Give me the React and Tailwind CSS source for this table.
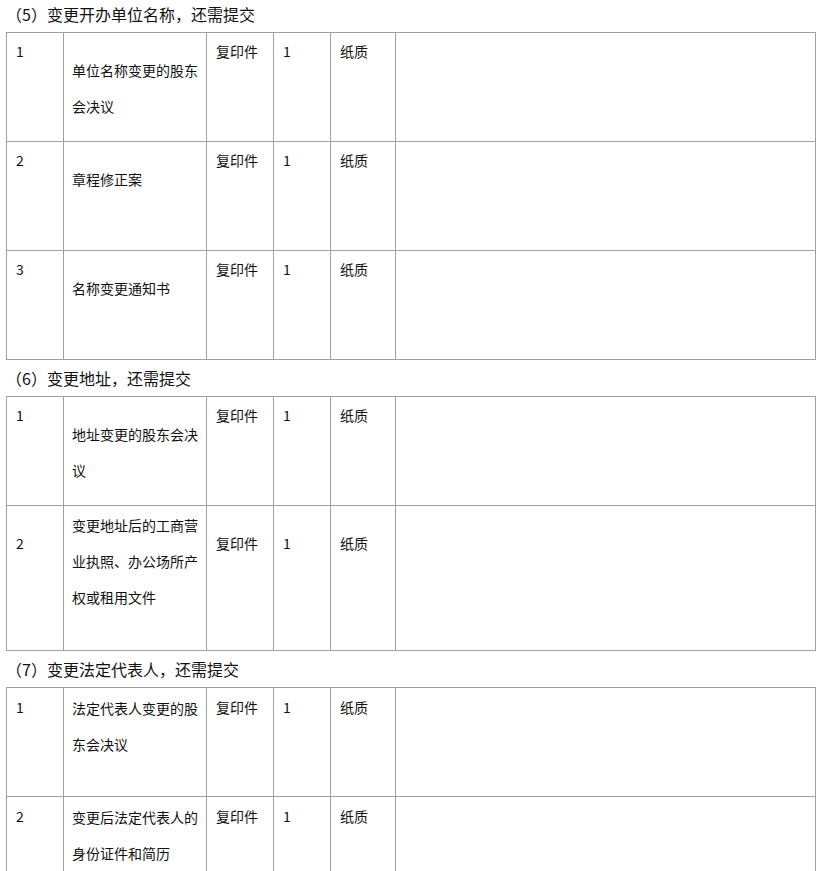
import React from 'react';

const sections = [
  {
    title: '（5）变更开办单位名称，还需提交',
    rows: [
      { no: '1', name: '单位名称变更的股东会决议', h: 'h-[108px]', namePad: 'pt-[19px]', pad: 'pt-[8px]' },
      { no: '2', name: '章程修正案', h: 'h-[109px]', namePad: 'pt-[19px]', pad: 'pt-[8px]' },
      { no: '3', name: '名称变更通知书', h: 'h-[109px]', namePad: 'pt-[19px]', pad: 'pt-[8px]' },
    ],
  },
  {
    title: '（6）变更地址，还需提交',
    rows: [
      { no: '1', name: '地址变更的股东会决议', h: 'h-[108px]', namePad: 'pt-[19px]', pad: 'pt-[8px]' },
      { no: '2', name: '变更地址后的工商营业执照、办公场所产权或租用文件', h: 'h-[145px]', namePad: 'pt-[1px]', pad: 'pt-[27px]' },
    ],
  },
  {
    title: '（7）变更法定代表人，还需提交',
    rows: [
      { no: '1', name: '法定代表人变更的股东会决议', h: 'h-[108px]', namePad: 'pt-[2px]', pad: 'pt-[9px]' },
      { no: '2', name: '变更后法定代表人的身份证件和简历', h: 'h-[109px]', namePad: 'pt-[2px]', pad: 'pt-[9px]' },
    ],
  },
];

function Row({ row, first }) {
  const cell = 'border-r border-[#a0a0a0] pl-[9px] leading-[20px]';
  return (
    <div className={`flex ${row.h} ${first ? '' : 'border-t border-[#a0a0a0]'}`}>
      <div className={`w-[57px] shrink-0 ${cell} ${row.pad}`}>{row.no}</div>
      <div className={`w-[143px] shrink-0 border-r border-[#a0a0a0] pl-[8px] pr-[6px] leading-[36px] ${row.namePad}`}>
        {row.name}
      </div>
      <div className={`w-[67px] shrink-0 ${cell} ${row.pad}`}>复印件</div>
      <div className={`w-[57px] shrink-0 ${cell} ${row.pad}`}>1</div>
      <div className={`w-[65px] shrink-0 ${cell} ${row.pad}`}>纸质</div>
      <div className="flex-1"></div>
    </div>
  );
}

export default function App() {
  return (
    <div
      className="bg-white text-[#111] w-[823px] h-[871px] overflow-hidden"
      style={{ fontFamily: '"Noto Sans CJK SC", "Noto Sans", sans-serif' }}
    >
      {sections.map((s, i) => (
        <div key={i}>
          <h2 className={`pl-[6px] text-[16px] leading-[28px] mb-[4px] ${i === 0 ? '' : 'mt-[4px]'}`}>{s.title}</h2>
          <div className="ml-[6px] w-[810px] border border-[#a0a0a0] text-[14px]">
            {s.rows.map((r, j) => (
              <Row key={j} row={r} first={j === 0} />
            ))}
          </div>
        </div>
      ))}
    </div>
  );
}
